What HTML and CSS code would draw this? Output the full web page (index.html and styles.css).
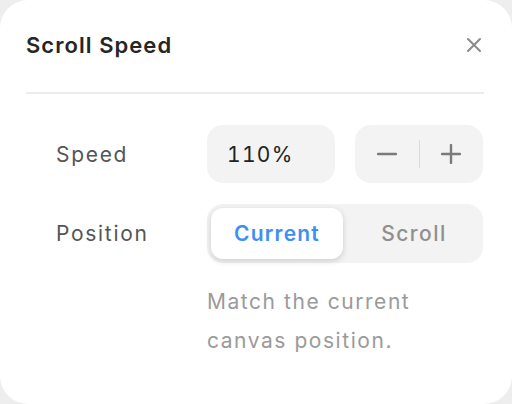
FILE: index.html
```html
<!DOCTYPE html>
<html>
<head>
<meta charset="utf-8">
<link rel="stylesheet" href="styles.css">
</head>
<body>
<div class="card">
  <div class="header">
    <div class="title">Scroll Speed</div>
    <button class="close" aria-label="Close">
      <svg width="16" height="16" viewBox="0 0 16 16"><path d="M2 2L14 14M14 2L2 14" stroke="#8a8a8a" stroke-width="2" stroke-linecap="round"/></svg>
    </button>
  </div>
  <div class="divider"></div>
  <div class="form">
    <div class="label">Speed</div>
    <div class="controls speed">
      <div class="field">110%</div>
      <div class="stepper">
        <span class="step"><svg width="20" height="20" viewBox="0 0 20 20"><path d="M1 10H19" stroke="#7a7a7a" stroke-width="2.4" stroke-linecap="round"/></svg></span>
        <span class="sep"></span>
        <span class="step"><svg width="20" height="20" viewBox="0 0 20 20"><path d="M1 10H19M10 1V19" stroke="#7a7a7a" stroke-width="2.4" stroke-linecap="round"/></svg></span>
      </div>
    </div>
    <div class="label">Position</div>
    <div class="controls">
      <div class="segmented">
        <div class="seg active">Current</div>
        <div class="seg">Scroll</div>
      </div>
      <p class="help">Match the current canvas position.</p>
    </div>
  </div>
</div>
</body>
</html>
```
FILE: styles.css
```css
* { box-sizing: border-box; }
html, body { margin: 0; padding: 0; }
body {
  background: #eeeeee;
  font-family: Inter, "Noto Sans", sans-serif;
  width: 512px;
  height: 404px;
  overflow: hidden;
}
.card {
  width: 512px;
  height: 404px;
  background: #ffffff;
  border-radius: 28px;
  padding: 33px 28px 0 26px;
}
.header {
  display: flex;
  justify-content: space-between;
  align-items: center;
  height: 24px;
}
.title {
  font-size: 22px;
  font-weight: 600;
  color: #262626;
  line-height: 24px;
  letter-spacing: 1.05px;
}
.close {
  border: 0;
  background: none;
  padding: 0;
  width: 16px;
  height: 16px;
  display: flex;
  margin-right: 2px;
}
.divider {
  height: 2px;
  background: #ececec;
  margin-top: 35px;
}
.form {
  display: grid;
  grid-template-columns: 151px 276px;
  padding-left: 30px;
  margin-top: 31px;
  row-gap: 21px;
}
.label {
  font-size: 21px;
  color: #555555;
  height: 58px;
  display: flex;
  align-items: center;
  letter-spacing: 1.7px;
}
.controls.speed {
  display: flex;
  gap: 20px;
}
.field {
  width: 128px;
  height: 58px;
  background: #f3f3f3;
  border-radius: 16px;
  font-size: 21px;
  color: #222222;
  display: flex;
  align-items: center;
  padding-left: 20px;
  letter-spacing: 1.3px;
  font-variant-numeric: tabular-nums;
}
.stepper {
  width: 128px;
  height: 58px;
  background: #f3f3f3;
  border-radius: 16px;
  display: flex;
  align-items: center;
}
.step {
  display: flex;
  flex: 1;
  justify-content: center;
}
.sep {
  width: 1px;
  height: 28px;
  background: #dcdcdc;
}
.segmented {
  width: 276px;
  height: 59px;
  background: #f3f3f3;
  border-radius: 16px;
  padding: 4px;
  display: flex;
}
.seg {
  flex: 1;
  display: flex;
  align-items: center;
  justify-content: center;
  font-size: 21px;
  color: #8f8f8f;
  font-weight: 500;
  border-radius: 12px;
  letter-spacing: 1.2px;
}
.seg.active {
  flex: 0 0 132px;
  background: #ffffff;
  color: #3d8ef5;
  font-weight: 600;
  box-shadow: 0 2px 6px rgba(0,0,0,0.16);
}
.seg:not(.active) { padding-left: 6px; letter-spacing: 1.5px; }
.help {
  margin: 19px 0 0 0;
  font-size: 21px;
  line-height: 39px;
  color: #9a9a9a;
  width: 250px;
  letter-spacing: 1.55px;
}
```
